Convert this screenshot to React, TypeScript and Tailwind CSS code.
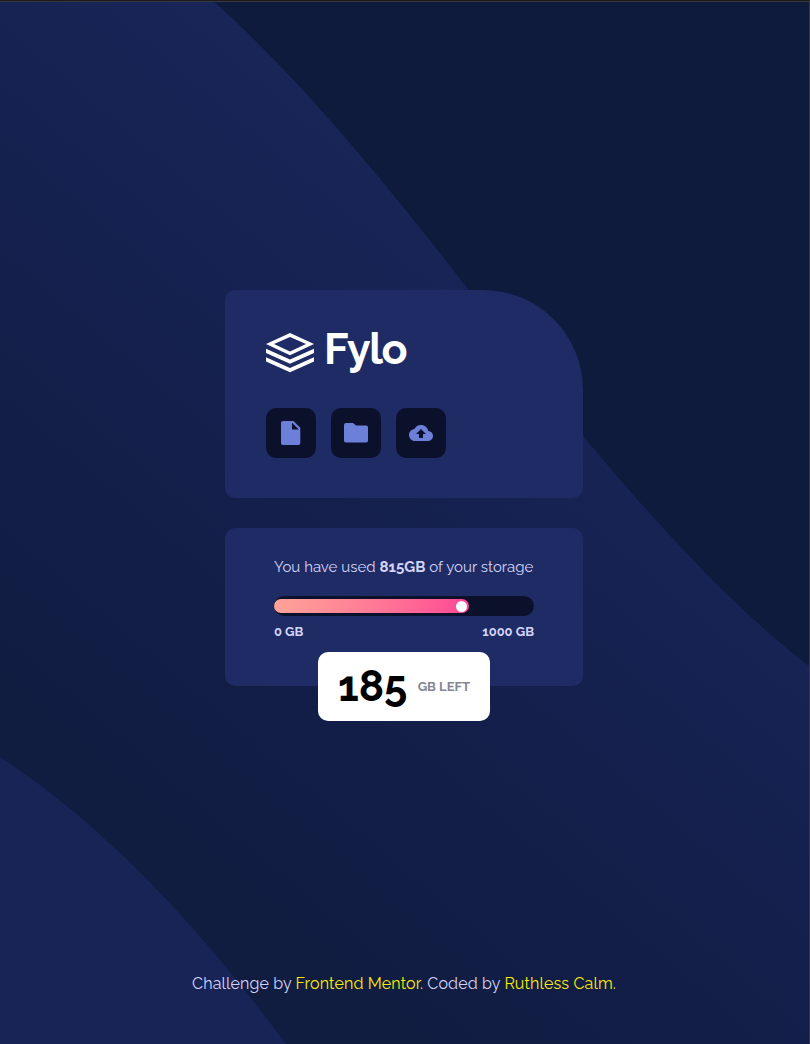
import type { ReactNode } from "react";

function Backdrop() {
  return (
    <svg className="absolute inset-0 h-full w-full" viewBox="0 0 810 1044" preserveAspectRatio="none" aria-hidden="true">
      <defs>
        <linearGradient id="band" gradientUnits="userSpaceOnUse" x1="211" y1="0" x2="-223" y2="511">
          <stop offset="0" stopColor="#182557" />
          <stop offset="0.5" stopColor="#141f4c" />
          <stop offset="1" stopColor="#111c41" />
        </linearGradient>
      </defs>
      <path fill="url(#band)" d="M0 0H212C300 78 390 188 467 288C507 339 544 389 583 436C653 520 731 606 810 667V1044H0Z" />
      <path fill="#182456" d="M0 757C108 828 200 928 286 1044H0Z" />
      <path fill="#1b1b1d" d="M0 0H810V1H0Z" />
      <path fill="#39383d" d="M0 1H810V2H0ZM809 2H810V1044H809Z" />
    </svg>
  );
}

function Logo() {
  return (
    <div className="flex h-[50px] items-center">
      <svg className="mt-[2px] h-[40px] w-[48px] shrink-0" viewBox="0 0 48 40" fill="#fff">
        <path fillRule="evenodd" d="M24 0L48 11L24 22.3L0 11ZM24 3.9L8 11L24 18.4L40 11Z" />
        <path d="M0 15.7L24 26.6L48 15.7V19.9L24 30.8L0 19.9ZM0 24.2L24 35L48 24.2V28.4L24 39.3L0 28.4Z" />
      </svg>
      <span className="-mt-[6px] ml-[10px] text-[43px] leading-[50px] font-bold tracking-[-1.4px] text-white">Fylo</span>
    </div>
  );
}

function Tile({ label, children }: { label: string; children: ReactNode }) {
  return (
    <button aria-label={label} className="flex size-[50px] items-center justify-center rounded-[10px] bg-[#0c112b]">
      {children}
    </button>
  );
}

export default function App() {
  return (
    <div className="relative h-[1044px] w-full overflow-hidden bg-[#0e1b3c] font-['Raleway','Lato',sans-serif] text-[#d5d4f8]">
      <Backdrop />
      <main className="relative flex flex-col items-center pt-[290px] pr-[2px]">
        <section className="h-[208px] w-[358px] rounded-[10px] rounded-tr-[100px] bg-[#1e2b65] px-[41px] pt-[37px]">
          <Logo />
          <div className="mt-[31px] flex gap-[15px]">
            <Tile label="Documents">
              <svg className="h-6 w-5" viewBox="0 0 20 24" fill="#6c80d9">
                <path fillRule="evenodd" d="M2 0H12.5L19.3 6.8V22Q19.3 24 17.3 24H2Q0 24 0 22V2Q0 0 2 0ZM11 1.8V8.5H17.8Z" />
              </svg>
            </Tile>
            <Tile label="Folders">
              <svg className="h-5 w-6" viewBox="0 0 24 20" fill="#6c80d9">
                <path d="M2 0H9L12 2.5H22Q24 2.5 24 4.5V17.5Q24 19.5 22 19.5H2Q0 19.5 0 17.5V2Q0 0 2 0Z" />
              </svg>
            </Tile>
            <Tile label="Upload">
              <svg className="size-6" viewBox="0 0 24 24" fill="#6c80d9">
                <path d="M19.35 10.04C18.67 6.59 15.64 4 12 4 9.11 4 6.6 5.64 5.35 8.04 2.34 8.36 0 10.91 0 14c0 3.31 2.69 6 6 6h13c2.76 0 5-2.24 5-5 0-2.64-2.05-4.78-4.65-4.96ZM14 13v4h-4v-4H7l5-5 5 5h-3Z" />
              </svg>
            </Tile>
          </div>
        </section>
        <section className="mt-[30px] flex h-[158px] w-[358px] flex-col rounded-[10px] bg-[#1e2b65] px-[49px] pt-[27px]">
          <p className="text-[15px] leading-6 tracking-[0.02px] whitespace-nowrap">
            You have used <b>815GB</b> of your storage
          </p>
          <div className="mt-[17px] flex h-5 shrink-0 items-center rounded-full bg-[#0c112b]">
            <div className="flex h-[14px] w-[75%] items-center justify-end rounded-full bg-linear-to-r from-[#ffa398] to-[#ff4694] pr-[2px]">
              <div className="size-[11px] rounded-full bg-white" />
            </div>
          </div>
          <div className="mt-[6px] flex justify-between text-[13px] leading-5 font-bold">
            <span>0 GB</span>
            <span>1000 GB</span>
          </div>
          <div className="mt-[10px] flex h-[69px] w-[172px] shrink-0 items-center self-center rounded-[10px] bg-white px-5">
            <span className="text-[42px] leading-none font-bold text-black">185</span>
            <span className="ml-auto text-[13px] font-bold text-[#848594]">GB LEFT</span>
          </div>
        </section>
        <footer className="mt-[286px] text-base leading-6 tracking-[0.14px] whitespace-nowrap">
          Challenge by <a className="text-[#fcec08]">Frontend Mentor.</a> Coded by <a className="text-[#fcec08]">Ruthless Calm.</a>
        </footer>
      </main>
    </div>
  );
}
